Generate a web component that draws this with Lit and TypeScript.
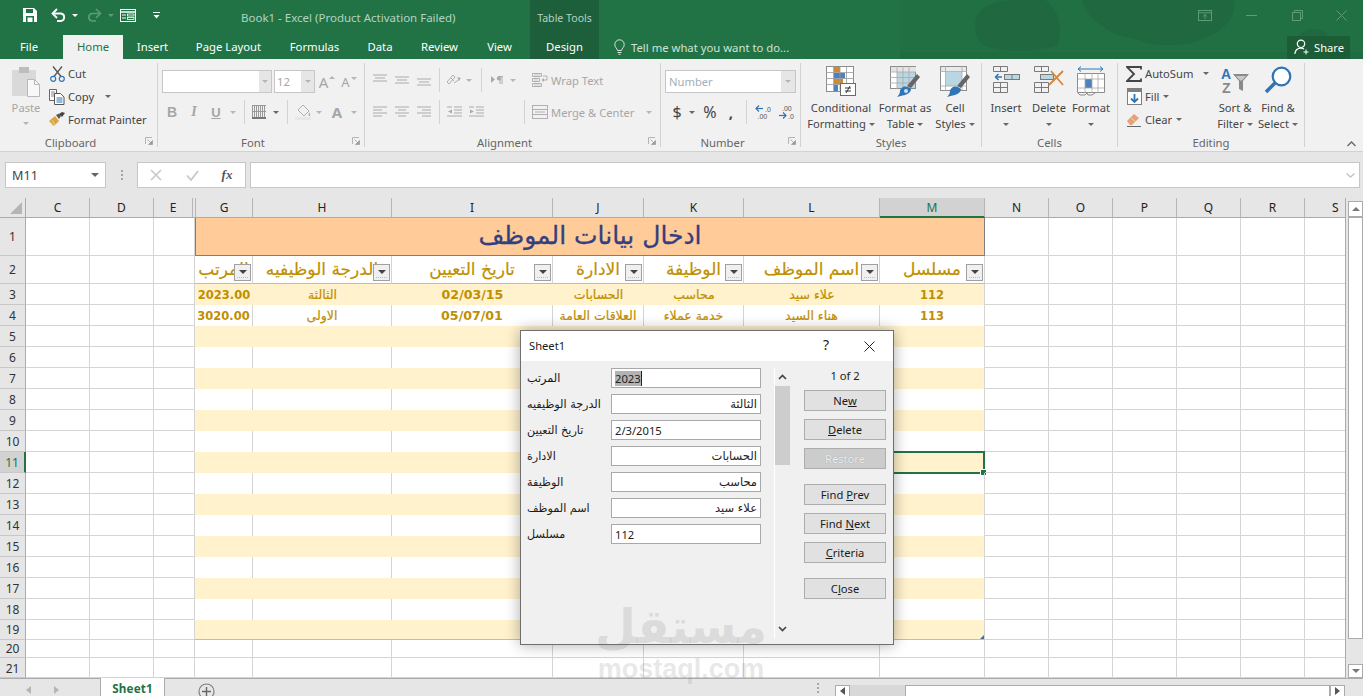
import { LitElement, html, css, svg } from "lit";
import { customElement } from "lit/decorators.js";

const s = (w: number, h: number, body: unknown) =>
  html`<svg width=${w} height=${h} viewBox="0 0 ${w} ${h}" fill="none">${body}</svg>`;

const I = {
  save: s(16, 16, svg`<path d="M1 1h11l3 3v11H1z" fill="#fff"/><rect x="4" y="2" width="7" height="4" fill="#217346"/><rect x="4" y="9" width="8" height="6" fill="#217346"/><rect x="5.5" y="10.500" width="5" height="4.500" fill="#fff"/>`),
  undo: s(16, 14, svg`<path d="M2 5.500h8a3.800 3.800 0 0 1 0 7.500H6" stroke="#fff" stroke-width="1.800"/><path d="M6 1L1.500 5.500 6 10" stroke="#fff" stroke-width="1.800"/>`),
  redo: s(16, 14, svg`<path d="M14 5.500H6a3.800 3.800 0 0 0 0 7.500h4" stroke="#5f9a7a" stroke-width="1.600"/><path d="M10 1l4.500 4.500L10 10" stroke="#5f9a7a" stroke-width="1.600"/>`),
  form: s(16, 13, svg`<rect x=".5" y=".5" width="15" height="12" stroke="#fff"/><path d="M0 3h16" stroke="#fff" stroke-width="1.500"/><path d="M2 6h4M2 9h4" stroke="#fff"/><rect x="7.500" y="5" width="6.500" height="2" stroke="#fff" stroke-width=".8"/><rect x="7.500" y="8.500" width="6.500" height="2" stroke="#fff" stroke-width=".8"/>`),
  qat: s(7, 7, svg`<path d="M0 .5h7" stroke="#fff"/><path d="M.5 3h6L3.500 6.500z" fill="#fff"/>`),
  bulb: s(11, 16, svg`<path d="M3.500 11.500C3 9 .8 8.500.8 5.500a4.700 4.700 0 0 1 9.400 0c0 3-2.200 3.500-2.700 6z" stroke="#d6e6dc"/><path d="M3.500 13.500h4M4.500 15.300h2" stroke="#d6e6dc"/>`),
  share: s(16, 16, svg`<circle cx="7" cy="4.800" r="3.700" stroke="#fff" stroke-width="1.200"/><path d="M.8 15c.5-3.500 2.700-5.800 6.200-5.800 1.200 0 2.200.3 3 .8" stroke="#fff" stroke-width="1.200"/><path d="M12 10.500v5M9.500 13h5" stroke="#fff"/>`),
  ribbonOpt: s(14, 11, svg`<rect x=".5" y=".5" width="13" height="10" stroke="#5f9a7a"/><path d="M0 2.800h14M7 9V4.500M5 6.500l2-2 2 2" stroke="#5f9a7a"/>`),
  min: s(11, 1, svg`<path d="M0 .5h11" stroke="#5f9a7a"/>`),
  restore: s(11, 11, svg`<rect x=".5" y="2.500" width="8" height="8" stroke="#5f9a7a"/><path d="M2.500 2.500v-2h8v8h-2" stroke="#5f9a7a"/>`),
  close: s(11, 11, svg`<path d="M.5.500l10 10M10.500.500l-10 10" stroke="#5f9a7a"/>`),
  paste: s(29, 32, svg`<rect x="0" y="4" width="24" height="26" fill="#d9d9d9"/><rect x="7" y="1" width="10" height="6" fill="#bdbdbd"/><path d="M15.500 13.500h7l5 5v12h-12z" fill="#f8f8f8" stroke="#b8b8b8"/><path d="M22.500 13.500v5h5" stroke="#b8b8b8"/>`),
  cut: s(15, 16, svg`<path d="M3 .5l8 10M12 .5l-8 10" stroke="#555" stroke-width="1.300"/><circle cx="3.200" cy="12.800" r="2.500" stroke="#2f75b5" stroke-width="1.200"/><circle cx="11.800" cy="12.800" r="2.500" stroke="#2f75b5" stroke-width="1.200"/>`),
  copy: s(16, 16, svg`<path d="M.5.500h7v11h-7z" fill="#fff" stroke="#666"/><path d="M2 3h4M2 5h4M2 7h4" stroke="#666" stroke-width=".8"/><path d="M5.500 4.500h6l3.500 3.500v7.500H5.500z" fill="#fff" stroke="#555"/><path d="M7.500 9h6M7.500 11h6M7.500 13h6" stroke="#2f75b5"/>`),
  painter: s(16, 15, svg`<path d="M0 9l6-5 4 5-5 5z" fill="#d9a441"/><path d="M1 10l3 4M3 8l3 5" stroke="#f0d38a"/><path d="M7 3l3-1.500 2 2.500-2 3z" fill="#555"/><path d="M10 2l3-2 3 1-3 4z" fill="#444"/>`),
  top: s(15, 12, svg`<path d="M0 1h14M2 4h10M0 7h14" stroke="#ababab" stroke-width="1"/>`),
  mid: s(15, 12, svg`<path d="M0 3h14M2 6h10M0 9h14" stroke="#ababab"/>`),
  bot: s(15, 12, svg`<path d="M0 5h14M2 8h10M0 11h14" stroke="#ababab"/>`),
  left: s(15, 12, svg`<path d="M0 1h14M0 4h9M0 7h14M0 10h9" stroke="#ababab"/>`),
  center: s(15, 12, svg`<path d="M0 1h14M3 4h8M0 7h14M3 10h8" stroke="#ababab"/>`),
  right: s(15, 12, svg`<path d="M0 1h14M5 4h9M0 7h14M5 10h9" stroke="#ababab"/>`),
  indL: s(16, 12, svg`<path d="M7 1h8M7 4h8M7 7h8M0 10h15M0 1h5" stroke="#ababab"/><path d="M5 3.500L1 5.500l4 2z" fill="#ababab"/>`),
  indR: s(16, 12, svg`<path d="M7 1h8M7 4h8M7 7h8M0 10h15M0 1h5" stroke="#ababab"/><path d="M1 3.500l4 2-4 2z" fill="#ababab"/>`),
  orient: s(16, 15, svg`<path d="M1 9l6-7 2 2-6 7z" stroke="#b0b0b0"/><path d="M5 5l3 3M8 10l6-4" stroke="#b0b0b0"/><path d="M11 4l4 1-2 3z" fill="#b0b0b0"/>`),
  rtl: s(13, 10, svg`<path d="M0 1l4 3.500L0 8z" fill="#aaa"/><path d="M7 1.500h5M9 1.500V9M11 1.500V9" stroke="#aaa"/><circle cx="7.800" cy="3.500" r="2" fill="#aaa"/>`),
  wrap: s(16, 15, svg`<path d="M.5.500h9v3h-9zM.5 5.500h7v3h-7zM.5 10.500h9v3h-9z" stroke="#b0b0b0"/><path d="M2 2h6M2 7h4M2 12h6" stroke="#c9c9c9"/><path d="M11 3h4v4h-5" stroke="#b0b0b0"/><path d="M12 5l-2.500 2 2.500 2z" fill="#b0b0b0"/>`),
  merge: s(16, 14, svg`<rect x=".5" y=".5" width="15" height="13" stroke="#b0b0b0"/><path d="M0 4.500h16M0 9.500h16" stroke="#b0b0b0"/><path d="M3 7h10" stroke="#b0b0b0"/>`),
  incd: s(16, 14, svg`<path d="M1 3.500h7" stroke="#2f75b5" stroke-width="1.200"/><path d="M4 .5L1 3.500l3 3" stroke="#2f75b5" stroke-width="1.200"/><text x="10" y="6.500" font-size="7" font-family="Liberation Sans" fill="#555">.0</text><text x="2.500" y="13.500" font-size="7" font-family="Liberation Sans" fill="#555">.00</text>`),
  decd: s(16, 14, svg`<text x="3" y="6" font-size="7" font-family="Liberation Sans" fill="#555">.00</text><path d="M0 10.500h7" stroke="#2f75b5" stroke-width="1.200"/><path d="M4 7.500l3 3-3 3" stroke="#2f75b5" stroke-width="1.200"/><text x="9" y="13.500" font-size="7" font-family="Liberation Sans" fill="#555">.0</text>`),
  cf: s(31, 32, svg`<rect x=".5" y=".5" width="27" height="25" fill="#fff" stroke="#8c8c8c"/><rect x="8" y="1" width="6" height="5.500" fill="#c98b3a"/><rect x="8" y="7" width="11" height="5.500" fill="#4f81bd"/><rect x="8" y="13" width="9" height="5.500" fill="#c98b3a"/><rect x="8" y="19" width="4" height="6" fill="#4f81bd"/><path d="M7.500 0v26M14 0v26M20.500 0v26M0 6.500h28M0 12.500h28M0 18.500h28" stroke="#9a9a9a" stroke-width=".8"/><rect x="14.500" y="17.500" width="15" height="12" fill="#fff" stroke="#6a6a6a"/><path d="M19 22h6M19 25h6M24 20l-4 7" stroke="#333"/>`),
  fat: s(31, 32, svg`<rect x=".5" y=".5" width="25" height="22" fill="#fff" stroke="#8c8c8c"/><rect x="1" y="1" width="25" height="5" fill="#e4e4e4"/><rect x="7" y="6" width="18" height="16" fill="#b9d7e2"/><path d="M7 0v23M13 0v23M19 0v23M0 6h26M0 11.500h26M0 17h26" stroke="#a8a8a8" stroke-width=".8"/><path d="M17 20l10-12 3 3-9 11z" fill="#666"/><path d="M13 21c3-1 6 0 8 2 0 3-3 5-6 6-3 1-6 1-8 2 2-2 3-4 3-6 0-1 1-3 3-4z" fill="#2f75b5"/><circle cx="16" cy="25" r="2" fill="#cfe3f2"/>`),
  cs: s(31, 32, svg`<rect x=".5" y=".5" width="26" height="24" fill="#fff" stroke="#8c8c8c"/><rect x="6" y="6" width="16" height="14" fill="#b9d7e2"/><rect x="1" y="1" width="25" height="4.500" fill="#e9e9e9"/><path d="M5.500 0v25M22 0v25M0 5.500h27M0 20h27" stroke="#a8a8a8" stroke-width=".8"/><path d="M17 20l10-12 3 3-9 11z" fill="#666"/><path d="M13 21c3-1 6 0 8 2 0 3-3 5-6 6-3 1-6 1-8 2 2-2 3-4 3-6 0-1 1-3 3-4z" fill="#2f75b5"/>`),
  ins: s(27, 28, svg`<path d="M.5.500h14v5H.5zM7.500.500v5M.5 16.500h14v10H.5zM7.500 16.500v10M.5 21.500h14" stroke="#7a7a7a"/><rect x="11.500" y="8.500" width="15" height="5" fill="#b9d7e2" stroke="#7a7a7a"/><path d="M19 8.500v5" stroke="#7a7a7a"/><path d="M9 11H3" stroke="#2f75b5" stroke-width="1.500"/><path d="M5.500 8l-3 3 3 3" stroke="#2f75b5" stroke-width="1.500"/>`),
  del: s(31, 28, svg`<path d="M.5.500h14v5H.5zM7.500.500v5M.5 16.500h14v10H.5zM7.500 16.500v10M.5 21.500h14" stroke="#7a7a7a"/><rect x="6.500" y="8.500" width="13" height="5" fill="#b9d7e2" stroke="#7a7a7a"/><path d="M17 5l12 14M29 5L15 19" stroke="#d9843b" stroke-width="1.800"/>`),
  fmt: s(28, 30, svg`<path d="M1 3h25" stroke="#2f75b5"/><path d="M4 .5L1 3l3 2.500M23 .5L26 3l-3 2.500" stroke="#2f75b5"/><path d="M.5 7.500h27v19H.5z" fill="#fff" stroke="#8c8c8c"/><rect x="8" y="13" width="7" height="9" fill="#4f81bd"/><path d="M8 7v20M15 7v20M21 7v20M1 13h26M1 22h26" stroke="#a8a8a8" stroke-width=".8"/><path d="M1 27l2 2h5l2-2 1 2h4l3-2" stroke="#8c8c8c"/>`),
  sum: s(16, 16, svg`<path d="M15 3.500V1H1l7 7-7 7h14v-2.500" stroke="#444" stroke-width="1.800"/>`),
  fill: s(15, 17, svg`<rect x=".5" y=".5" width="14" height="16" fill="#fff" stroke="#7f7f7f"/><rect x="0" y="0" width="15" height="4" fill="#7f7f7f"/><path d="M7.500 6v8M4 10.500l3.500 3.500 3.500-3.500" stroke="#2f75b5" stroke-width="1.800"/>`),
  clear: s(15, 14, svg`<path d="M0 8L7 1l5 4-7 7H3z" fill="#e6a179"/><path d="M0 13.500h14" stroke="#666"/><path d="M4 5l5 4" stroke="#f4d3be"/>`),
  sort: s(30, 29, svg`<text x="1" y="13" font-size="14" font-weight="700" font-family="Liberation Sans" fill="#2f75b5">A</text><text x="2" y="27" font-size="14" font-weight="700" font-family="Liberation Sans" fill="#8a8a8a">Z</text><path d="M13 8h16l-6 7v10l-4-2v-8z" fill="#8a8a8a"/><path d="M16 10h10l-4 4.500h-2z" fill="#c9c9c9"/>`),
  find: s(28, 30, svg`<circle cx="17.500" cy="10.500" r="8.800" fill="#fff" stroke="#2f75b5" stroke-width="2.200"/><path d="M11 17L2 26" stroke="#2f75b5" stroke-width="3.500"/>`),
  launch: s(8, 8, svg`<path d="M.5 7V.5H7" stroke="#b5b5b5"/><path d="M2.500 2.500L6.500 6.500M7.500 3.500v4h-4z" fill="#9a9a9a" stroke="#9a9a9a" stroke-width=".7"/>`),
  chev: s(9, 6, svg`<path d="M.5 5L4.500 1l4 4" stroke="#666" stroke-width="1.300"/>`),
  x: s(12, 12, svg`<path d="M1 1l10 10M11 1L1 11" stroke="#c8c8c8" stroke-width="1.600"/>`),
  ok: s(13, 11, svg`<path d="M1 5.500L5 10 12 1" stroke="#c8c8c8" stroke-width="1.800"/>`),
  fdown: s(9, 5, svg`<path d="M.5.500l4 3.500 4-3.500" stroke="#c4c4c4" stroke-width="1.400"/>`),
  dlgx: s(11, 11, svg`<path d="M.5.500l10 10M10.500.500l-10 10" stroke="#222"/>`),
  chevUp: s(9, 6, svg`<path d="M1 5l3.500-3.500L8 5" stroke="#444" stroke-width="1.700"/>`),
  chevDn: s(9, 6, svg`<path d="M1 1l3.500 3.500L8 1" stroke="#444" stroke-width="1.700"/>`),
  plus: s(17, 17, svg`<circle cx="8.500" cy="8.500" r="7.500" stroke="#808080" stroke-width="1.200"/><path d="M8.500 4v9M4 8.500h9" stroke="#666" stroke-width="1.400"/>`),
  fillc: s(17, 16, svg`<path d="M8 1l6 6-5 5-6-6z" stroke="#b0b0b0"/><path d="M14 8c1 2 2 3 1 4s-2-1-1-4z" fill="#b0b0b0"/><rect x="0" y="13" width="16" height="3" fill="#e6e6e6"/>`),
};

const COLS = ["C", "D", "E", "F", "G", "H", "I", "J", "K", "L", "M", "N", "O", "P", "Q", "R", "S"];
const TABLE = ["G", "H", "I", "J", "K", "L", "M"];
const HEAD: Record<string, string> = { G: "المرتب", H: "الدرجة الوظيفيه", I: "تاريخ التعيين", J: "الادارة", K: "الوظيفة", L: "اسم الموظف", M: "مسلسل" };
const DATA: Record<number, Record<string, string>> = {
  3: { G: "2023.00", H: "الثالثة", I: "02/03/15", J: "الحسابات", K: "محاسب", L: "علاء سيد", M: "112" },
  4: { G: "3020.00", H: "الاولى", I: "05/07/01", J: "العلاقات العامة", K: "خدمة عملاء", L: "هناء السيد", M: "113" },
};
const FIELDS = [
  ["المرتب", "2023", "hlk"],
  ["الدرجة الوظيفيه", "الثالثة", "rtl"],
  ["تاريخ التعيين", "2/3/2015", ""],
  ["الادارة", "الحسابات", "rtl"],
  ["الوظيفة", "محاسب", "rtl"],
  ["اسم الموظف", "علاء سيد", "rtl"],
  ["مسلسل", "112", ""],
];

@customElement("app-root")
export class AppRoot extends LitElement {
  static styles = css`
    :host { display: block; width: 1363px; height: 696px; overflow: hidden; }
    * { box-sizing: border-box; }
    .app { position: relative; width: 1363px; height: 696px; overflow: hidden; background: #e6e6e6; font: 11.2px "Noto Sans", sans-serif; color: #444; }

    .chrome { position: relative; display: flex; height: 59px; background: #217346; color: #fff; overflow: hidden; }
    .blobs { position: absolute; left: 0; top: 0; }
    .cleft { position: relative; flex: none; width: 530px; display: flex; flex-direction: column; }
    .qat { height: 35px; display: flex; align-items: center; padding: 0 0 5px 22px; }
    .qat span { line-height: 0; flex: none; }
    .qat .undo { margin-left: 13px; }
    .qat .car { border-top-color: #fff; margin-left: 5px; }
    .qat .redo { margin-left: 8px; }
    .qat .redocar { border-top-color: #5f9a7a; margin-left: 6px; }
    .qat .qform { margin-left: 6px; }
    .qat .cust { margin-left: 17px; }
    .qat .doc { margin-left: 81px; color: #b5d2c1; font-size: 11.5px; white-space: nowrap; line-height: 14px; padding-top: 6px; }
    .tabs { height: 24px; display: grid; grid-template-columns: 63px 60px 59px 93px 79px 52px 67px 53px; align-items: stretch; }
    .tab { display: flex; align-items: center; justify-content: center; font-size: 11.3px; white-space: nowrap; padding-bottom: 1px; }
    .tab.file { justify-content: flex-start; padding-left: 20px; }
    .tab.on { background: #f1f1f1; color: #217346; }
    .cctx { position: relative; flex: none; width: 69px; background: #1d5f3a; display: flex; flex-direction: column; align-items: center; }
    .ctx1 { height: 35px; display: flex; align-items: center; color: #b5d2c1; font-size: 10.6px; white-space: nowrap; }
    .ctx2 { height: 24px; display: flex; align-items: center; font-size: 11.3px; padding-bottom: 1px; }
    .cright { position: relative; flex: 1; min-width: 0; display: flex; flex-direction: column; }
    .win { height: 35px; display: grid; grid-template-columns: 583px 46px 46px 46px 43px; align-items: center; justify-items: center; padding-bottom: 5px; }
    .tellrow { height: 24px; display: flex; align-items: center; padding-left: 15px; }
    .tell { margin-left: 6px; color: #d0e2d7; font-size: 11.3px; white-space: nowrap; }
    .sharebtn { margin-left: auto; margin-right: 13px; width: 63px; height: 23px; background: #1c5d38; display: flex; align-items: center; padding-left: 7px; gap: 4px; font-size: 11.2px; }

    .ribbon { height: 93px; background: #f1f1f1; border-bottom: 1px solid #d2d2d2; display: flex; align-items: flex-start; padding-top: 4px; }
    .group { height: 84px; border-right: 1px solid #d2d2d2; display: flex; flex-direction: column; flex: none; }
    .gc { height: 72px; }
    .glabel { position: relative; height: 12px; line-height: 16px; text-align: center; color: #666; font-size: 11.3px; }
    .glabel.l { padding-right: 16px; }
    .launch { position: absolute; right: 4px; top: 2px; line-height: 0; }
    .g1 { width: 158px; } .g2 { width: 207px; } .g3 { width: 296px; } .g4 { width: 140px; } .g5 { width: 181px; } .g6 { width: 136px; } .g7 { width: 187px; }
    .gc.row { display: flex; }
    .pastec { width: 49px; padding: 3px 0 0 3px; display: flex; flex-direction: column; align-items: center; color: #a6a6a6; }
    .pastec .t { margin-top: 2px; line-height: 16px; }
    .pastec .car { margin-top: 6px; }
    .small { display: flex; flex-direction: column; }
    .sm { height: 23px; display: flex; align-items: center; white-space: nowrap; padding-bottom: 2px; }
    .sm .icon { width: 16px; display: flex; justify-content: center; margin-right: 3px; line-height: 0; }
    .sm .car { margin-left: 7px; }
    .sm.copy .car { margin-left: 11px; }
    .sm.auto .car { margin-left: 10px; }
    .sm.fillrow .car, .sm.clr .car { margin-left: 4px; }
    .car { display: inline-block; flex: none; width: 0; height: 0; border-style: solid; border-width: 3px 3px 0 3px; border-color: #666 transparent transparent transparent; }
    .car.d { border-top-color: #b5b5b5; }
    .sep { width: 1px; height: 24px; background: #d2d2d2; }
    .r { display: grid; align-items: center; justify-items: center; height: 24px; }
    .fontc { padding-top: 7px; display: flex; flex-direction: column; gap: 7px; }
    .f1 { display: flex; height: 23px; padding-left: 4px; align-items: center; }
    .combo { height: 23px; border: 1px solid #c6c6c6; background: #fff; display: flex; align-items: stretch; }
    .combo .txt { flex: 1; display: flex; align-items: center; padding-left: 2px; color: #a6a6a6; }
    .combo .arr { background: #e6e6e6; display: flex; align-items: center; justify-content: center; }
    .cname { width: 110px; } .cname .arr { width: 12px; }
    .csize { width: 41px; margin-left: 2px; } .csize .arr { width: 13px; }
    .grow { font-size: 15px; color: #a6a6a6; display: flex; justify-content: center; align-items: flex-start; gap: 1px; }
    .grow1 { width: 24px; } .grow2 { width: 20px; font-size: 13px; }
    .tri { margin-top: 4px; width: 0; height: 0; border-style: solid; border-width: 0 3px 3px 3px; border-color: transparent transparent #b5b5b5 transparent; }
    .tri.trid { margin-top: 4px; border-width: 3px 3px 0 3px; border-color: #b5b5b5 transparent transparent transparent; }
    .f2 { padding-left: 3px; grid-template-columns: 22px 22px 22px 12px 10px 20px 14px 8px 24px 8px 28px 6px; }
    .bd { font: 700 14px "Liberation Sans", sans-serif; color: #a6a6a6; }
    .it { font: italic 700 14px "Liberation Serif", serif; color: #a6a6a6; }
    .un { font: 700 13px "Liberation Sans", sans-serif; color: #a6a6a6; text-decoration: underline; }
    .bigA { font: 700 15px "Noto Sans", sans-serif; color: #a6a6a6; }
    .borders { width: 14px; height: 14px; border-bottom: 2px solid #777; background-image: linear-gradient(90deg, #999 1px, transparent 1px), linear-gradient(#999 1px, transparent 1px); background-size: 2px 6px, 2px 6px; }
    .alc { display: flex; flex-direction: column; padding-top: 5px; gap: 8px; }
    .a1 { padding-left: 4px; grid-template-columns: 22px 22px 22px 8px 22px 8px 16px 16px 16px 7px auto; }
    .a2 { padding-left: 4px; grid-template-columns: 22px 22px 22px 8px 23px 22px 33px 7px auto; }
    .ai { display: flex; align-items: center; gap: 3px; color: #a6a6a6; white-space: nowrap; padding-left: 4px; justify-self: start; }
    .ai .car { margin-left: 9px; }
    .nc { display: flex; flex-direction: column; padding-top: 7px; gap: 7px; padding-left: 4px; }
    .cnum { width: 131px; } .cnum .arr { width: 14px; }
    .cnum .txt { color: #9fb0bd; padding-left: 3px; }
    .n2 { grid-template-columns: 24px 6px 30px 12px 18px 16px 32px; }
    .dollar { font: 400 16px "Noto Sans", sans-serif; color: #444; }
    .pct { font: 400 16px "Noto Sans", sans-serif; color: #444; }
    .comma { font: 700 15px "Noto Sans", sans-serif; color: #444; line-height: 14px; }
    .bigs { display: grid; height: 72px; }
    .b5 { grid-template-columns: 80px 48px 52px; }
    .b6 { grid-template-columns: 48px 38px 46px; }
    .big { display: flex; flex-direction: column; align-items: center; white-space: nowrap; line-height: 16px; padding-top: 3px; }
    .big .ic { height: 34px; display: flex; align-items: flex-start; }
    .big .t2 { height: 16px; display: flex; align-items: center; gap: 3px; }
    .b7 { display: flex; }
    .b7 .small { width: 95px; padding-left: 8px; }
    .sf { width: 44px; } .fs { width: 42px; }
    .coll { align-self: flex-end; margin: 0 0 0 42px; padding-bottom: 4px; line-height: 0; }

    .fbar { height: 46px; background: #e6e6e6; display: flex; padding: 10px 3px 0 5px; }
    .fb { height: 26px; border: 1px solid #c6c6c6; background: #fff; display: flex; align-items: center; }
    .namebox { width: 101px; font-size: 12.6px; color: #444; padding: 0 6px; justify-content: space-between; }
    .namebox .car { border-width: 4px 4px 0 4px; }
    .dots { width: 31px; display: flex; flex-direction: column; align-items: center; gap: 2px; height: 26px; justify-content: center; }
    .dots i { width: 2px; height: 2px; background: #a6a6a6; }
    .fxb { width: 109px; display: grid; grid-template-columns: 36px 36px 34px; justify-items: center; }
    .fxt { font: italic 700 13px "Liberation Serif", serif; color: #555; }
    .finput { flex: 1; margin-left: 4px; justify-content: flex-end; padding-right: 4px; }

    .work { height: 481px; display: flex; border-bottom: 1px solid #ababab; }
    .sheet { width: 1345px; height: 480px; overflow: hidden; display: grid; background: #fff;
      grid-template-columns: 26px 64px 64px 39px 2px 58px 139px 161px 91px 100px 136px 105px 64px 64px 64px 64px 64px 40px;
      grid-template-rows: 20px 38px 28px 21px 21px 21px 21px 21px 21px 21px 21px 21px 21px 21px 21px 21px 21px 21px 21px 20px 18px; }
    .corner { background: #e6e6e6; border-bottom: 1px solid #ababab; border-right: 1px solid #ababab; display: flex; align-items: flex-end; justify-content: flex-end; padding: 0 3px 3px 0; }
    .corner i { width: 0; height: 0; border-style: solid; border-width: 0 0 12px 12px; border-color: transparent transparent #b5b5b5 transparent; }
    .ch { background: #e6e6e6; border-bottom: 1px solid #ababab; border-right: 1px solid #b5b5b5; display: flex; align-items: center; justify-content: center; color: #222; font-size: 12px; }
    .ch.F { border-right: 0; }
    .ch.G { border-left: 1px solid #b5b5b5; }
    .ch.S { border-right: 0; justify-content: flex-start; padding-left: 27px; }
    .ch.on { background: #d2d2d2; color: #217346; border-bottom: 2px solid #217346; }
    .rh { background: #e6e6e6; border-right: 1px solid #ababab; border-bottom: 1px solid #c8c8c8; display: flex; align-items: center; justify-content: center; color: #333; font-size: 12px; }
    .rh.rb { align-items: flex-end; padding-bottom: 1px; line-height: 14px; }
    .rh.on { background: #d2d2d2; color: #217346; border-right: 2px solid #217346; }
    .c { position: relative; border-right: 1px solid #d4d4d4; border-bottom: 1px solid #d4d4d4; min-width: 0; display: flex; align-items: center; justify-content: center; }
    .c.E { border-right: 0; }
    .c.S { border-right: 0; }
    .title { grid-column: span 7; background: #ffcc99; border: 1px solid #7f7f7f; border-top: 0; color: #333f7f; font: 25px "DejaVu Sans", sans-serif; padding-bottom: 2px; -webkit-text-stroke: .3px #333f7f; }
    .hd { color: #bf8f00; font: 17px "DejaVu Sans", sans-serif; -webkit-text-stroke: .2px #bf8f00; border-bottom: 1px solid #ffc000; overflow: hidden; white-space: nowrap; padding-bottom: 1px; }
    .band { background: #fff2cc; border-right: 0; border-bottom: 0; }
    .band.M { border-right: 1px solid #d4d4d4; }
    .wh { border-bottom: 0; }
    .c.last { border-bottom: 1px solid #ffc000; }
    .val { color: #bf8f00; font: 12.5px "DejaVu Sans", sans-serif; white-space: nowrap; -webkit-text-stroke: .2px #bf8f00; }
    .val.num { font-weight: 700; font-size: 11.5px; -webkit-text-stroke: 0; }
    .val.date { font-size: 12.6px; }
    .filter { position: absolute; right: 1px; bottom: 2px; width: 17px; height: 17px; background: #f0f0f0; border: 1px solid #a0a0a0; display: flex; flex-direction: column; align-items: center; justify-content: center; padding-top: 2px; }
    .filter .car { border-width: 4px 4px 0 4px; border-top-color: #444; }
    .filter i.dots2 { margin-top: 3px; width: 11px; height: 1px; background-image: linear-gradient(90deg, #bbb 1px, transparent 1px); background-size: 2px 1px; }
    .cursor { position: absolute; inset: -1px; border: 2px solid #217346; }
    .hdl { position: absolute; right: -3px; bottom: -3px; width: 5px; height: 5px; background: #217346; outline: 1px solid #fff; }
    .resz { position: absolute; right: 0; bottom: 0; width: 0; height: 0; border-style: solid; border-width: 0 0 4px 4px; border-color: transparent transparent #3a6ea5 transparent; }

    .vs { width: 18px; border-left: 1px solid #ababab; background: #e6e6e6; padding: 3px 0 0 2px; display: flex; flex-direction: column; }
    .vb { width: 15px; background: #fff; border: 1px solid #ababab; display: flex; align-items: center; justify-content: center; }
    .vup { height: 16px; } .vdn { height: 14px; margin-top: 25px; }
    .vth { height: 423px; }
    .tri2 { width: 0; height: 0; border-style: solid; border-width: 0 4px 4px 4px; border-color: transparent transparent #777 transparent; }
    .tri3 { width: 0; height: 0; border-style: solid; border-width: 4px 4px 0 4px; border-color: #777 transparent transparent transparent; }

    .bottom { height: 17px; display: flex; background: #e6e6e6; align-items: stretch; }
    .nav { width: 100px; display: flex; padding: 5px 0 0 26px; gap: 23px; align-items: center; }
    .al { width: 0; height: 0; border-style: solid; border-width: 4px 5px 4px 0; border-color: transparent #b5b5b5 transparent transparent; }
    .ar { width: 0; height: 0; border-style: solid; border-width: 4px 0 4px 5px; border-color: transparent transparent transparent #b5b5b5; }
    .stab { width: 65px; height: 18px; margin-top: -1px; padding-top: 4px; background: #fff; border-left: 1px solid #ababab; border-right: 1px solid #ababab; display: flex; justify-content: center; color: #217346; font: 700 11.7px/13px "Noto Sans", sans-serif; letter-spacing: .1px; }
    .add { width: 84px; padding: 4px 0 0 33px; line-height: 0; overflow: hidden; }
    .dots3 { width: 34px; display: flex; flex-direction: column; align-items: center; padding-top: 4px; gap: 2px; }
    .dots3 i { width: 2px; height: 2px; background: #a6a6a6; }
    .hs { display: flex; padding-top: 6px; width: 510px; overflow: hidden; }
    .hb { width: 15px; height: 17px; background: #fff; border: 1px solid #ababab; display: flex; align-items: center; justify-content: center; padding-bottom: 6px; }
    .htrack { width: 55px; background: #d8d8d8; }
    .hth { width: 425px; height: 17px; background: #fff; border: 1px solid #ababab; }
    .al.al2 { border-color: transparent #555 transparent transparent; }
    .ar.ar2 { border-color: transparent transparent transparent #555; }
    .hsc { display: flex; margin-left: 552px; }

    .dialog { position: absolute; left: 520px; top: 330px; width: 374px; height: 315px; background: #f0f0f0; border: 1px solid #6f6f6f; box-shadow: 0 0 14px rgba(0,0,0,.33); color: #1a1a1a; display: flex; flex-direction: column; font-size: 11.2px; }
    .dt { height: 30px; background: #fff; display: grid; grid-template-columns: 1fr 46px 44px; align-items: center; padding: 0 0 2px 8px; }
    .dq { font-size: 14px; text-align: center; line-height: 14px; color: #222; }
    .dx { line-height: 0; text-align: left; padding: 2px 0 0 15px; }
    .db { flex: 1; display: flex; }
    .dform { width: 253px; padding: 7px 0 0 6px; display: flex; flex-direction: column; gap: 6px; }
    .fr { display: flex; height: 20px; align-items: center; }
    .lb { width: 84px; font: 11.2px "DejaVu Sans", sans-serif; white-space: nowrap; direction: rtl; text-align: left; }
    .inp { width: 150px; height: 20px; background: #fff; border: 1px solid #a9a9a9; display: flex; align-items: center; padding: 0 3px; font-size: 11.2px; color: #222; }
    .inp.rtl { justify-content: flex-end; font: 11.5px "DejaVu Sans", sans-serif; }
    .hl { background: #b3b3b3; border-right: 1px solid #222; line-height: 15px; }
    .dsb { width: 16px; margin-top: 7px; height: 270px; border-left: 1px solid #fff; display: flex; flex-direction: column; align-items: center; }
    .dsb .u { height: 18px; display: flex; align-items: center; justify-content: center; line-height: 0; }
    .dth { width: 15px; height: 79px; background: #cdcdcd; }
    .dsb .d2 { margin-top: auto; height: 18px; display: flex; align-items: center; line-height: 0; }
    .btns { flex: 1; padding: 5px 0 0 14px; display: flex; flex-direction: column; }
    .cnt { width: 82px; text-align: center; line-height: 20px; color: #222; }
    .btn { width: 82px; height: 21px; background: #e1e1e1; border: 1px solid #adadad; display: flex; align-items: center; justify-content: center; color: #1a1a1a; margin-top: 8px; }
    .btn span { white-space: pre; }
    .btn.first { margin-top: 4px; }
    .btn.gap { margin-top: 15px; }
    .btn.dis { background: #cccccc; color: #ededed; text-shadow: 0 0 1px #999; }

    .mark { position: absolute; left: 591px; top: 598px; width: 180px; pointer-events: none; text-align: center; color: rgba(110,110,110,.17); }
    .mk1 { font: 700 47px/57px "DejaVu Sans", sans-serif; height: 57px; white-space: nowrap; }
    .mk2 { font: 700 27px/28px "Liberation Sans", sans-serif; }
  `;

  private cell(r: number, col: string) {
    if (r === 1 && TABLE.includes(col)) {
      return col === "G" ? html`<div class="c title">ادخال بيانات الموظف</div>` : null;
    }
    const inT = TABLE.includes(col);
    if (r === 2 && inT) {
      return html`<div class="c hd"><span>${HEAD[col]}</span><div class="filter"><i class="car"></i><i class="dots2"></i></div></div>`;
    }
    if (inT && r >= 3 && r <= 19) {
      const band = r % 2 === 1;
      const v = DATA[r]?.[col];
      const num = v && /^[\d./]+$/.test(v);
      const date = v && v.includes("/");
      return html`<div class="c ${band ? "band" : "wh"} ${col} ${r === 19 ? "last" : ""}">
        ${v ? html`<span class="val ${num ? "num" : ""} ${date ? "date" : ""}">${v}</span>` : null}
        ${r === 11 && col === "M" ? html`<div class="cursor"><div class="hdl"></div></div>` : null}
        ${r === 19 && col === "M" ? html`<i class="resz"></i>` : null}
      </div>`;
    }
    return html`<div class="c ${col}"></div>`;
  }

  render() {
    const rows = Array.from({ length: 21 }, (_, i) => i + 1);
    return html`<div class="app">
      <div class="chrome">
        <svg class="blobs" width="1363" height="59" viewBox="0 0 1363 59">
          <path d="M900 0h463v59H900z" fill="#207044"/>
          <path d="M975 25c0-15 15-25 40-25h30c15 10 18 30 12 46-30 8-60 6-76-2-4-6-6-12-6-19z" fill="#1f6840"/>
          <path d="M1082 0h152c2 16-8 30-30 38-10 8-50 10-65 2l-25-6c-15-10-30-20-32-34z" fill="#1f6840"/>
          <path d="M1300 34c8-8 25-6 30 4 2 8-2 14-14 14-10 0-20-8-16-18z" fill="#1f6840"/>
          <path d="M900 52h463v7H900z" fill="#1f6c41"/>
        </svg>
        <div class="cleft">
          <div class="qat">
            <span>${I.save}</span><span class="undo">${I.undo}</span><i class="car"></i>
            <span class="redo">${I.redo}</span><i class="car redocar"></i>
            <span class="qform">${I.form}</span><span class="cust">${I.qat}</span>
            <span class="doc">Book1 - Excel (Product Activation Failed)</span>
          </div>
          <div class="tabs">
            <div class="tab file">File</div><div class="tab on">Home</div><div class="tab">Insert</div><div class="tab">Page Layout</div><div class="tab">Formulas</div><div class="tab">Data</div><div class="tab">Review</div><div class="tab">View</div>
          </div>
        </div>
        <div class="cctx"><div class="ctx1">Table Tools</div><div class="ctx2">Design</div></div>
        <div class="cright">
          <div class="win"><span></span>${I.ribbonOpt}${I.min}${I.restore}${I.close}</div>
          <div class="tellrow">${I.bulb}<span class="tell">Tell me what you want to do...</span>
            <div class="sharebtn">${I.share}<span>Share</span></div>
          </div>
        </div>
      </div>

      <div class="ribbon">
        <div class="group g1">
          <div class="gc row">
            <div class="pastec">${I.paste}<span class="t">Paste</span><i class="car d"></i></div>
            <div class="small">
              <div class="sm"><span class="icon">${I.cut}</span>Cut</div>
              <div class="sm copy"><span class="icon">${I.copy}</span>Copy<i class="car"></i></div>
              <div class="sm"><span class="icon">${I.painter}</span>Format Painter</div>
            </div>
          </div>
          <div class="glabel l">Clipboard<span class="launch">${I.launch}</span></div>
        </div>
        <div class="group g2">
          <div class="gc fontc">
            <div class="f1">
              <div class="combo cname"><div class="txt"></div><div class="arr"><i class="car d"></i></div></div>
              <div class="combo csize"><div class="txt">12</div><div class="arr"><i class="car d"></i></div></div>
              <div class="grow grow1">A<i class="tri"></i></div>
              <div class="grow grow2">A<i class="tri trid"></i></div>
            </div>
            <div class="r f2">
              <span class="bd">B</span><span class="it">I</span><span class="un">U</span><i class="car d"></i><i class="sep"></i>
              <i class="borders"></i><i class="car"></i><i class="sep"></i>
              ${I.fillc}
              <i class="car d"></i><span class="bigA">A</span><i class="car d"></i>
            </div>
          </div>
          <div class="glabel l">Font<span class="launch">${I.launch}</span></div>
        </div>
        <div class="group g3">
          <div class="gc alc">
            <div class="r a1">
              ${I.top}${I.mid}${I.bot}<i class="sep"></i>${I.orient}<i class="car d"></i><i class="sep"></i>${I.rtl}<i class="car d"></i><span></span>
              <div class="ai">${I.wrap}<span>Wrap Text</span></div>
            </div>
            <div class="r a2">
              ${I.left}${I.center}${I.right}<i class="sep"></i>${I.indL}${I.indR}<span></span><i class="sep"></i>
              <div class="ai">${I.merge}<span>Merge &amp; Center</span><i class="car d"></i></div>
            </div>
          </div>
          <div class="glabel l">Alignment<span class="launch">${I.launch}</span></div>
        </div>
        <div class="group g4">
          <div class="gc nc">
            <div class="combo cnum"><div class="txt">Number</div><div class="arr"><i class="car d"></i></div></div>
            <div class="r n2">
              <span class="dollar">$</span><i class="car"></i><span class="pct">%</span><span class="comma">,</span><i class="sep"></i>${I.incd}${I.decd}
            </div>
          </div>
          <div class="glabel l">Number<span class="launch">${I.launch}</span></div>
        </div>
        <div class="group g5">
          <div class="gc bigs b5">
            <div class="big"><span class="ic">${I.cf}</span><span>Conditional</span><span class="t2">Formatting<i class="car"></i></span></div>
            <div class="big"><span class="ic">${I.fat}</span><span>Format as</span><span class="t2">Table<i class="car"></i></span></div>
            <div class="big"><span class="ic">${I.cs}</span><span>Cell</span><span class="t2">Styles<i class="car"></i></span></div>
          </div>
          <div class="glabel">Styles</div>
        </div>
        <div class="group g6">
          <div class="gc bigs b6">
            <div class="big"><span class="ic">${I.ins}</span><span>Insert</span><span class="t2"><i class="car"></i></span></div>
            <div class="big"><span class="ic">${I.del}</span><span>Delete</span><span class="t2"><i class="car"></i></span></div>
            <div class="big"><span class="ic">${I.fmt}</span><span>Format</span><span class="t2"><i class="car"></i></span></div>
          </div>
          <div class="glabel">Cells</div>
        </div>
        <div class="group g7">
          <div class="gc b7">
            <div class="small">
              <div class="sm auto"><span class="icon">${I.sum}</span>AutoSum<i class="car"></i></div>
              <div class="sm fillrow"><span class="icon">${I.fill}</span>Fill<i class="car"></i></div>
              <div class="sm clr"><span class="icon">${I.clear}</span>Clear<i class="car"></i></div>
            </div>
            <div class="big sf"><span class="ic">${I.sort}</span><span>Sort &amp;</span><span class="t2">Filter<i class="car"></i></span></div>
            <div class="big fs"><span class="ic">${I.find}</span><span>Find &amp;</span><span class="t2">Select<i class="car"></i></span></div>
          </div>
          <div class="glabel">Editing</div>
        </div>
        <div class="coll">${I.chev}</div>
      </div>

      <div class="fbar">
        <div class="fb namebox">M11<i class="car"></i></div>
        <div class="dots"><i></i><i></i><i></i></div>
        <div class="fb fxb">${I.x}${I.ok}<span class="fxt">fx</span></div>
        <div class="fb finput">${I.fdown}</div>
      </div>

      <div class="work">
        <div class="sheet">
          <div class="corner"><i></i></div>
          ${COLS.map((c) => html`<div class="ch ${c} ${c === "M" ? "on" : ""}">${c === "F" ? "" : c}</div>`)}
          ${rows.map((r) => html`<div class="rh ${r === 11 ? "on" : ""} ${r === 21 ? "rb" : ""}">${r}</div>${COLS.map((c) => this.cell(r, c))}`)}
        </div>
        <div class="vs">
          <div class="vb vup"><i class="tri2"></i></div>
          <div class="vb vth"></div>
          <div class="vb vdn"><i class="tri3"></i></div>
        </div>
      </div>

      <div class="bottom">
        <div class="nav"><i class="al"></i><i class="ar"></i></div>
        <div class="stab">Sheet1</div>
        <div class="add">${I.plus}</div>
        <div class="hsc"><div class="dots3"><i></i><i></i><i></i></div></div>
        <div class="hs">
          <div class="hb"><i class="al al2"></i></div><div class="htrack"></div><div class="hth"></div><div class="hb"><i class="ar ar2"></i></div>
        </div>
      </div>

      <div class="dialog">
        <div class="dt"><span>Sheet1</span><span class="dq">?</span><span class="dx">${I.dlgx}</span></div>
        <div class="db">
          <div class="dform">
            ${FIELDS.map(([l, v, k]) => html`<div class="fr"><span class="lb">${l}</span>
              <div class="inp ${k}">${k === "hlk" ? html`<span class="hl">${v}</span>` : v}</div></div>`)}
          </div>
          <div class="dsb"><span class="u">${I.chevUp}</span><div class="dth"></div><span class="d2">${I.chevDn}</span></div>
          <div class="btns">
            <div class="cnt">1 of 2</div>
            <div class="btn first"><span>Ne<u>w</u></span></div>
            <div class="btn"><span><u>D</u>elete</span></div>
            <div class="btn dis"><span>Restore</span></div>
            <div class="btn gap"><span>Find <u>P</u>rev</span></div>
            <div class="btn"><span>Find <u>N</u>ext</span></div>
            <div class="btn"><span><u>C</u>riteria</span></div>
            <div class="btn gap"><span>C<u>l</u>ose</span></div>
          </div>
        </div>
      </div>

      <div class="mark"><div class="mk1">مستقل</div><div class="mk2">mostaql.com</div></div>
    </div>`;
  }
}
